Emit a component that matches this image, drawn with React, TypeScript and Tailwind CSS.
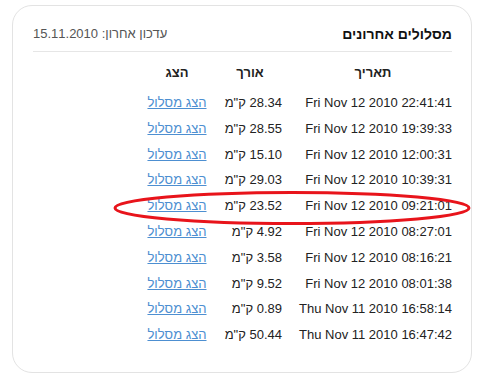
const rows = [
  {date: "Fri Nov 12 2010 22:41:41", len: "28.34"},
  {date: "Fri Nov 12 2010 19:39:33", len: "28.55"},
  {date: "Fri Nov 12 2010 12:00:31", len: "15.10"},
  {date: "Fri Nov 12 2010 10:39:31", len: "29.03"},
  {date: "Fri Nov 12 2010 09:21:01", len: "23.52"},
  {date: "Fri Nov 12 2010 08:27:01", len: "4.92"},
  {date: "Fri Nov 12 2010 08:16:21", len: "3.58"},
  {date: "Fri Nov 12 2010 08:01:38", len: "9.52"},
  {date: "Thu Nov 11 2010 16:58:14", len: "0.89"},
  {date: "Thu Nov 11 2010 16:47:42", len: "50.44"},
];

export default function App() {
  return (
    <div className="w-[481px] h-[381px] bg-white pt-[5px] pl-[12px] font-['Liberation_Sans',Arial,sans-serif]">
      <div
        dir="rtl"
        className="relative w-[460px] h-[368px] rounded-[20px] border border-[#e3e3e3] pr-[19px] pl-[20px]"
      >
        <div className="flex items-center justify-between h-[46px] pt-[11px] border-b border-[#e6e6e6]">
          <h2 className="text-[14px] font-bold text-[#111]">מסלולים אחרונים</h2>
          <span className="text-[13px] text-[#555]">עדכון אחרון: 15.11.2010</span>
        </div>

        <div className="grid grid-cols-[158px_88px_58px] text-[13px] text-[#222] mt-[13px] whitespace-nowrap">
          <div className="h-[30px] font-bold text-center leading-[16px]">תאריך</div>
          <div className="h-[30px] font-bold text-center leading-[16px]">אורך</div>
          <div className="h-[30px] font-bold text-center leading-[16px]">הצג</div>
          {rows.map(row => (
            <div key={row.date} className="contents">
              <div className="h-[25.8px] leading-[16px] text-right">{row.date}</div>
              <div className="h-[25.8px] leading-[16px] text-right pr-[12px]">
                {row.len} ק"מ
              </div>
              <div className="h-[25.8px] leading-[16px] flex justify-center">
                <a href="#" className="text-[#4d8fd1] underline">
                  הצג מסלול
                </a>
              </div>
            </div>
          ))}
        </div>

        <svg
          className="absolute left-[100px] top-[184px]"
          width="360"
          height="36"
          viewBox="0 0 360 36"
        >
          <ellipse cx="179" cy="18" rx="177" ry="15.5" fill="none" stroke="#e8141b" strokeWidth="3" />
        </svg>
      </div>
    </div>
  );
}
